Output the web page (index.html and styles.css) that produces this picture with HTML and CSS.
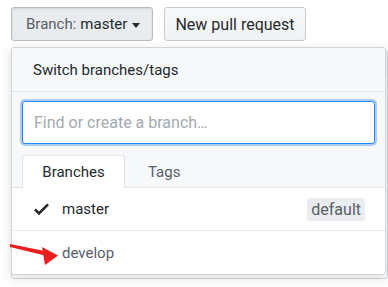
FILE: index.html
```html
<!DOCTYPE html>
<html>
<head>
<meta charset="utf-8">
<link rel="stylesheet" href="styles.css">
</head>
<body>
<div class="toolbar">
  <button class="btn btn-branch"><span class="lbl">Branch:</span> <span class="cur">master</span><span class="caret"></span></button>
  <button class="btn">New pull request</button>
</div>
<div class="filelist">
  <div class="fl-head"></div>
  <div class="fl-row"></div>
  <div class="fl-row"></div>
  <div class="fl-row"></div>
  <div class="fl-row"></div>
  <div class="fl-row"></div>
</div>
<div class="dropdown">
  <div class="dd-header">Switch branches/tags</div>
  <div class="dd-filter">
    <div class="dd-input">Find or create a branch…</div>
    <div class="tabs">
      <div class="tab selected">Branches</div>
      <div class="tab">Tags</div>
    </div>
  </div>
  <div class="dd-item">
    <svg class="check" width="15" height="20" viewBox="0 0 12 16"><path fill="#24292e" d="M12 5l-8 8-4-4 1.5-1.5L4 10l6.5-6.5L12 5z"/></svg>
    <span class="name">master</span>
    <span class="badge">default</span>
  </div>
  <div class="dd-item muted">
    <span class="name">develop</span>
  </div>
</div>
<svg class="arrow" width="60" height="35" viewBox="0 0 60 35">
  <polygon points="5,9 42,16.5 42,21 5,12" fill="#ec1c1c"/>
  <polygon points="53,20.5 37,12 40,30" fill="#ec1c1c"/>
</svg>
</body>
</html>
```
FILE: styles.css
```css
* { box-sizing: border-box; }
body {
  margin: 0;
  background: #fff;
  font-family: Roboto, "Noto Sans", Arial, sans-serif;
  color: #24292e;
  position: relative;
  width: 388px;
  height: 287px;
  overflow: hidden;
}
.toolbar {
  display: flex;
  gap: 11px;
  padding: 7px 0 0 11px;
}
.btn {
  height: 34px;
  width: 142px;
  border: 1px solid #c8cbcf;
  border-radius: 3px;
  background: linear-gradient(#f8f9fa, #f0f2f4);
  font-family: inherit;
  font-size: 16px;
  color: #24292e;
  padding: 0;
  display: flex;
  align-items: center;
  justify-content: center;
}
.btn-branch {
  background: #e9ecef;
  border-color: #b9bdc2;
  box-shadow: inset 0 1px 2px rgba(27,31,35,.12);
  justify-content: flex-start;
  padding-left: 14px;
  font-size: 15px;
}
.btn-branch .lbl { color: #586069; margin-right: 4px; }
.btn-branch .cur { color: #24292e; }
.caret {
  display: inline-block;
  margin-left: 5px;
  margin-top: 2px;
  border-top: 5px solid #24292e;
  border-left: 4px solid transparent;
  border-right: 4px solid transparent;
}
.filelist {
  margin: 8px 0 0 11px;
  width: 377px;
  height: 230px;
  border: 1px solid #d1d5da;
  border-radius: 3px;
  overflow: hidden;
}
.fl-head {
  height: 25px;
  background: #f1f8ff;
  border-bottom: 1px solid #c8e1ff;
}
.fl-row {
  height: 39px;
  border-bottom: 1px solid #eaecef;
}
.dropdown {
  position: absolute;
  left: 11px;
  top: 47px;
  width: 375px;
  background: #fff;
  border: 1px solid #d1d5da;
  border-radius: 3px;
  box-shadow: 0 3px 12px rgba(27,31,35,.15);
  overflow: hidden;
}
.dd-header {
  height: 44px;
  background: #f6f8fa;
  border-bottom: 1px solid #e1e4e8;
  padding-left: 21px;
  display: flex;
  align-items: center;
  font-size: 15px;
  color: #24292e;
}
.dd-filter {
  background: #f6f8fa;
  padding: 9px 10px 0 10px;
  border-bottom: 1px solid #e1e4e8;
}
.dd-input {
  height: 43px;
  background: #fff;
  border: 1px solid #2188ff;
  border-radius: 3px;
  box-shadow: 0 0 0 2px rgba(3,102,214,.3);
  padding-left: 11px;
  display: flex;
  align-items: center;
  font-size: 16px;
  color: #a3aab1;
}
.tabs {
  display: flex;
  margin-top: 11px;
  margin-bottom: -1px;
}
.tab {
  height: 33px;
  padding: 0 22px;
  display: flex;
  align-items: center;
  font-size: 15px;
  color: #586069;
  border: 1px solid transparent;
  border-bottom: 0;
  border-radius: 3px 3px 0 0;
}
.tab.selected {
  width: 103px;
  justify-content: center;
  padding: 0;
  background: #fff;
  border-color: #e1e4e8;
  color: #24292e;
}
.dd-item {
  height: 43px;
  display: flex;
  align-items: center;
  padding-left: 50px;
  padding-right: 20px;
  font-size: 15px;
  color: #24292e;
  border-bottom: 1px solid #eaecef;
  position: relative;
}
.dd-item:last-child { border-bottom: 0; }
.dd-item.muted { color: #586069; }
.check {
  position: absolute;
  left: 22px;
  top: 11px;
}
.badge {
  margin-left: auto;
  background: #eaecef;
  color: #586069;
  font-size: 16px;
  padding: 0 4px;
  border-radius: 3px;
  height: 23px;
  display: flex;
  align-items: center;
}
.arrow {
  position: absolute;
  left: 5px;
  top: 235px;
}
```
